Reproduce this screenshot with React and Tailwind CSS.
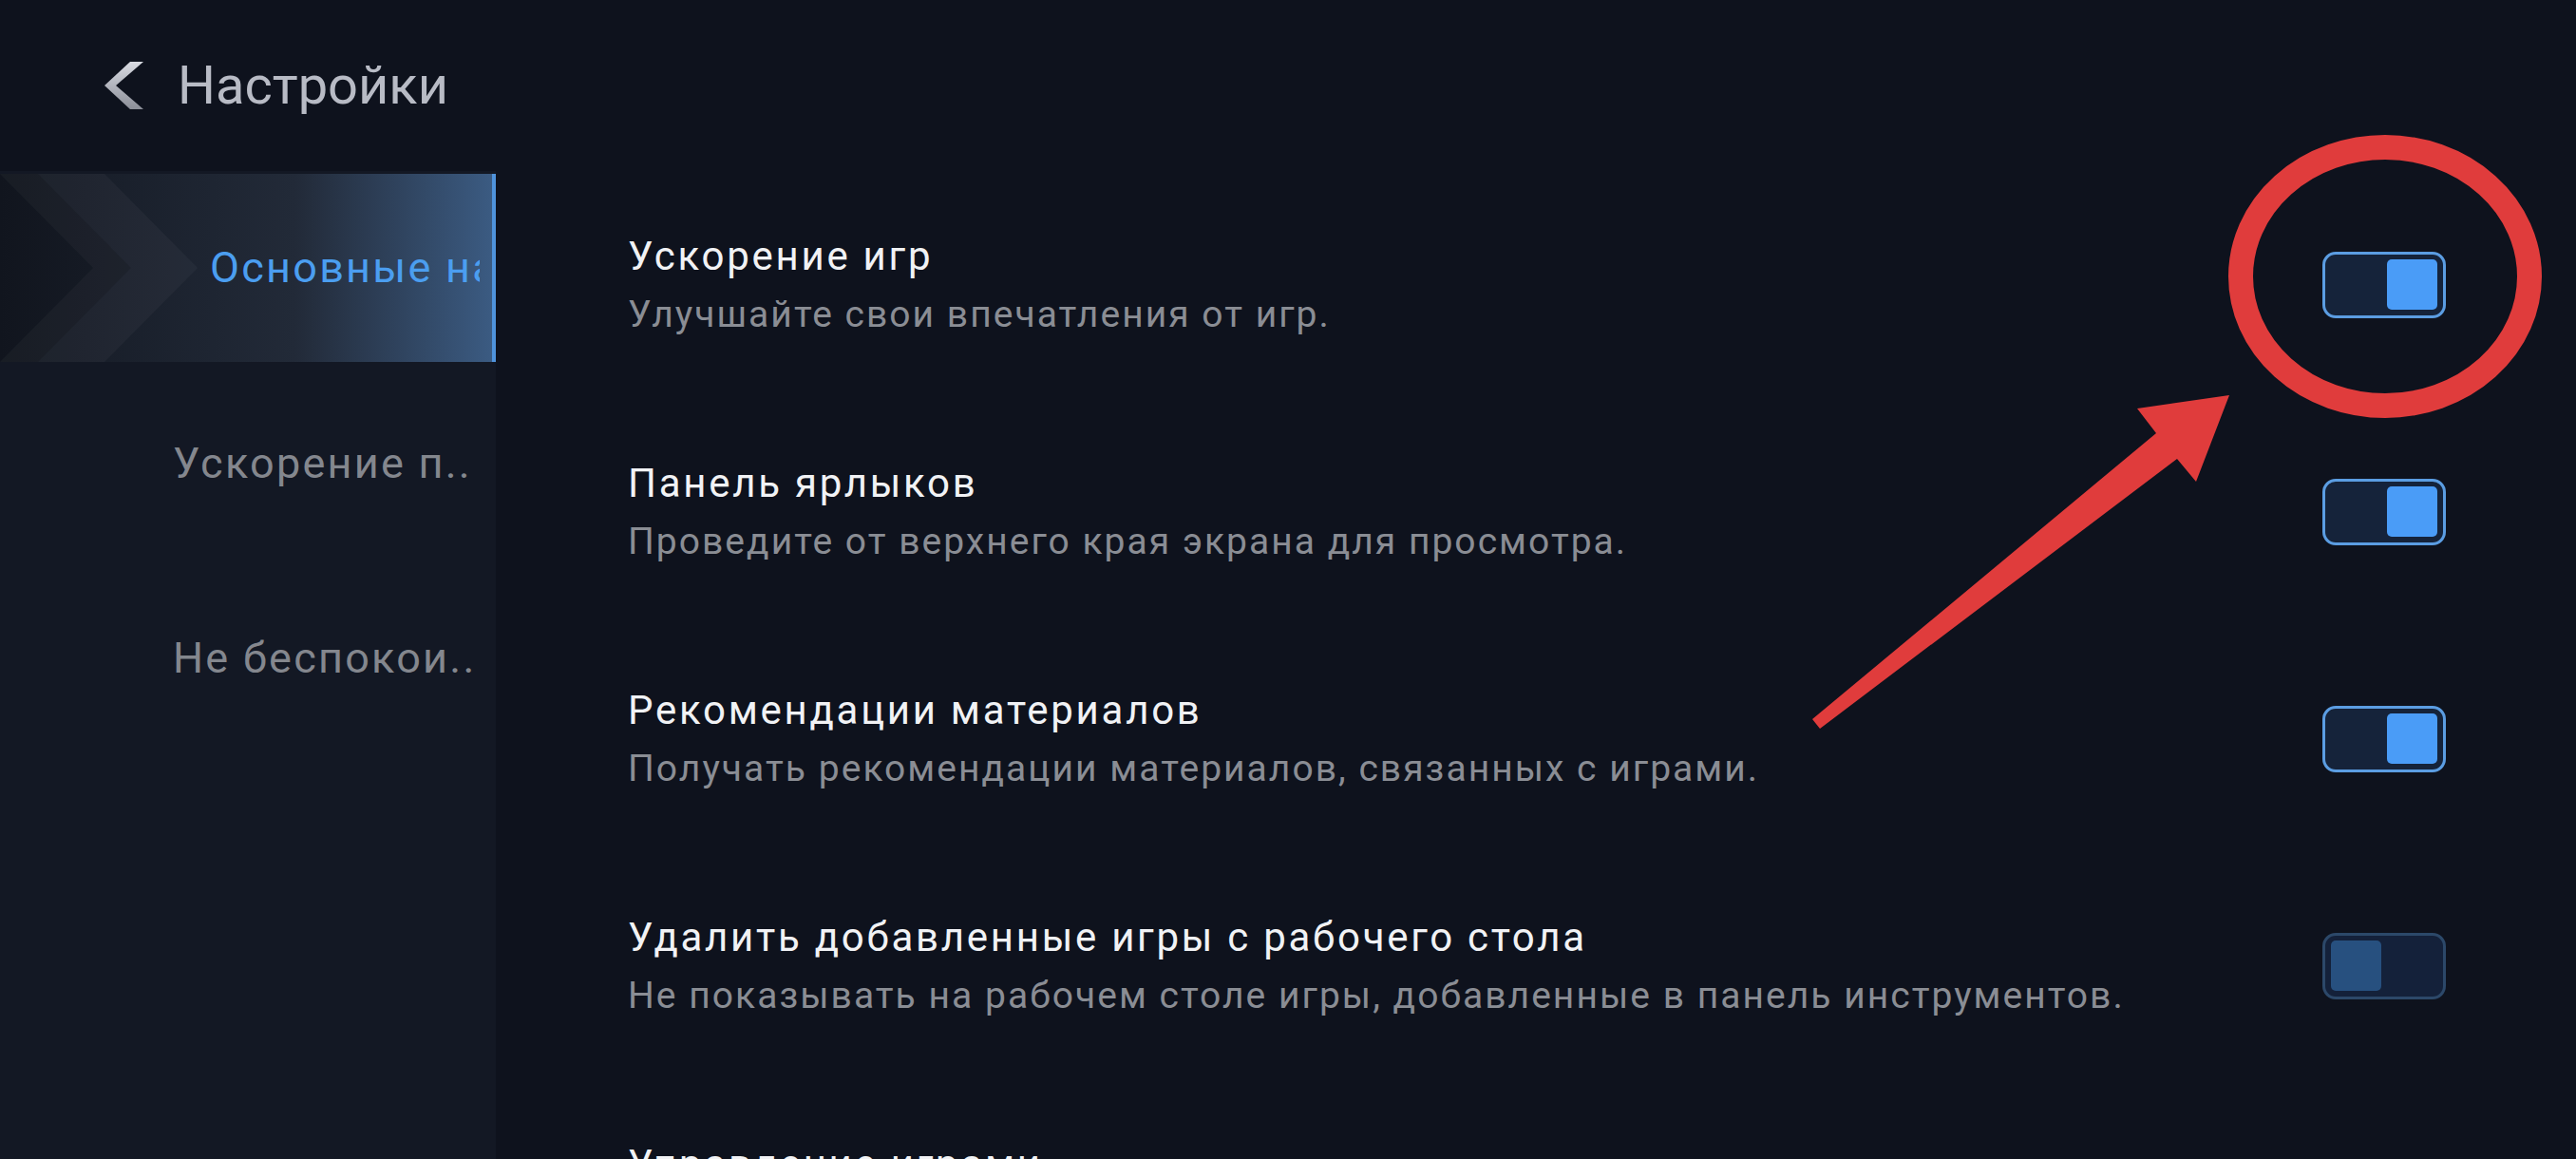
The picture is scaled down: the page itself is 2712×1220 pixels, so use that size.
import React from 'react';

const ROWS = [
  { title: 'Ускорение игр', desc: 'Улучшайте свои впечатления от игр.', on: true },
  { title: 'Панель ярлыков', desc: 'Проведите от верхнего края экрана для просмотра.', on: true },
  {
    title: 'Рекомендации материалов',
    desc: 'Получать рекомендации материалов, связанных с играми.',
    on: true,
  },
  {
    title: 'Удалить добавленные игры с рабочего стола',
    desc: 'Не показывать на рабочем столе игры, добавленные в панель инструментов.',
    on: false,
  },
];

function Toggle({ on }) {
  return on ? (
    <div className="w-[130px] h-[70px] rounded-[14px] border-[3px] border-[#5b9de2] bg-[#15233a] flex justify-end items-center p-[6px] flex-none">
      <div className="w-[53px] h-[53px] rounded-[5px] bg-[#4a9cf7]" />
    </div>
  ) : (
    <div className="w-[130px] h-[70px] rounded-[14px] border-[3px] border-[#2c4869] bg-[#14213a] flex justify-start items-center p-[6px] flex-none">
      <div className="w-[53px] h-[53px] rounded-[5px] bg-[#27507f]" />
    </div>
  );
}

function SettingRow({ title, desc, on }) {
  return (
    <div className="h-[239px] flex items-center justify-between">
      <div className="flex flex-col gap-[12px]">
        <div className="text-[42px] leading-[50px] text-[#f1f2f5] tracking-[0.065em]">{title}</div>
        <div className="text-[39px] leading-[48px] text-[#8a8d94] tracking-[0.052em]">{desc}</div>
      </div>
      <Toggle on={on} />
    </div>
  );
}

function SelectedItem() {
  return (
    <div className="relative h-[198px] overflow-hidden bg-gradient-to-r from-[#141923] via-[#222a38] via-60% to-[#3b5b82] border-r-[4px] border-[#4f93dc] flex items-center">
      <svg className="absolute inset-0" width="518" height="198" viewBox="0 0 518 198">
        <polygon points="0,0 110,0 208,99 110,198 0,198 98,99" fill="#ffffff" fillOpacity="0.035" />
        <polygon points="0,0 40,0 138,99 40,198 0,198" fill="#000000" fillOpacity="0.12" />
      </svg>
      <div className="relative ml-[221px] w-[284px] overflow-hidden text-[45px] text-[#4b9ef0] tracking-[0.05em] whitespace-nowrap">
        Основные настройки
      </div>
    </div>
  );
}

export default function App() {
  return (
    <div className="relative w-[2712px] h-[1220px] overflow-hidden bg-[#0e121d] font-['Roboto',sans-serif]">
      <div className="h-[180px] flex items-center pl-[107px]">
        <svg width="46" height="50" viewBox="0 0 46 50">
          <defs>
            <linearGradient id="chev" x1="0" y1="0" x2="0" y2="1">
              <stop offset="0" stopColor="#d9dbe2" />
              <stop offset="1" stopColor="#8b8e98" />
            </linearGradient>
          </defs>
          <polygon points="30,0 44,0 15,25 44,50 30,50 3,25" fill="url(#chev)" />
        </svg>
        <div className="ml-[34px] text-[56px] text-[#b8bbc5]">Настройки</div>
      </div>
      <div className="flex h-[1040px]">
        <div className="w-[522px] flex-none bg-[#131824] pt-[3px]">
          <SelectedItem />
          <div className="mt-[4px] h-[205px] flex items-center pl-[182px] text-[45px] text-[#84878e] tracking-[0.05em] whitespace-nowrap">
            Ускорение п..
          </div>
          <div className="h-[205px] flex items-center pl-[182px] text-[45px] text-[#84878e] tracking-[0.05em] whitespace-nowrap">
            Не беспокои..
          </div>
        </div>
        <div className="flex-1 pl-[139px] pr-[137px]">
          {ROWS.map((r) => (
            <SettingRow key={r.title} {...r} />
          ))}
          <div className="h-[239px] flex items-center justify-between">
            <div className="flex flex-col gap-[12px]">
              <div className="text-[42px] leading-[50px] text-[#f1f2f5] tracking-[0.065em]">
                Управление играми
              </div>
              <div className="text-[39px] leading-[48px] text-[#8a8d94] tracking-[0.052em]">
                Настройки для добавленных игр.
              </div>
            </div>
            <svg width="24" height="44" viewBox="0 0 24 44" className="mr-[2px]">
              <polyline points="3,3 21,22 3,41" fill="none" stroke="#8b8e95" strokeWidth="4" strokeLinecap="round" />
            </svg>
          </div>
        </div>
      </div>
      <svg className="absolute left-0 top-0 pointer-events-none" width="2712" height="1220">
        <ellipse cx="2511" cy="291" rx="152" ry="136" fill="none" stroke="#e03c3c" strokeWidth="26" />
        <polygon
          points="1908,757 1916,767 2292,483 2312,507 2347,416 2250,430 2270,456"
          fill="#e03c3c"
        />
      </svg>
    </div>
  );
}
